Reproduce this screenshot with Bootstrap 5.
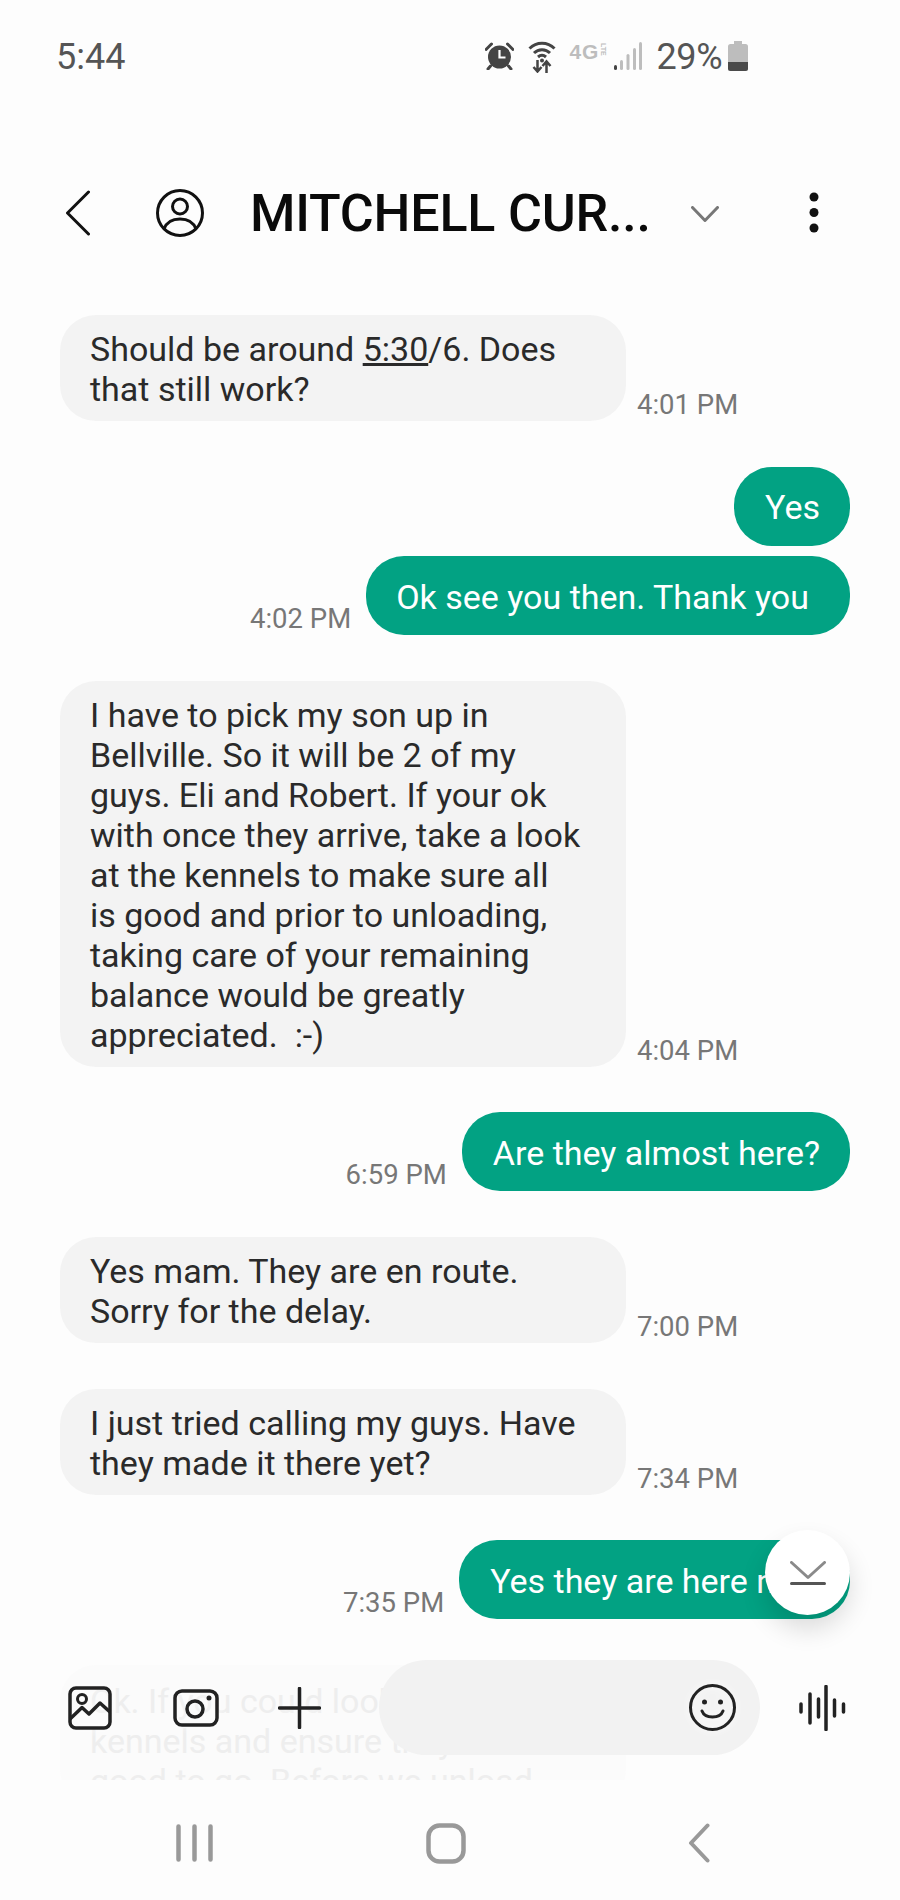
<!DOCTYPE html>
<html lang="en">
<head>
  <meta charset="UTF-8" />
  <meta name="viewport" content="width=device-width, initial-scale=1" />
  <title>Messages</title>
  <link href="https://cdn.jsdelivr.net/npm/bootstrap@5.3.0/dist/css/bootstrap.min.css" rel="stylesheet" />
  <style>
    body {
      background-color: #fdfdfd;
      font-family: Roboto, "Liberation Sans", sans-serif;
    }
    .phone {
      width: 900px;
      height: 1900px;
      overflow: hidden;
      background-color: #fdfdfd;
    }
    .status-row {
      height: 112px;
      padding-left: 56px;
      color: #555;
      font-size: 36px;
      flex: none;
    }
    .status-text { padding-top: 2px; }
    .status-icons {
      margin-left: 360px;
    }
    .icon-wifi { margin-left: 14px; }
    .net-mark {
      color: #bdbdbd;
      font-family: "Liberation Sans", sans-serif;
      font-size: 21px;
      font-weight: 700;
      line-height: 18px;
      letter-spacing: 1px;
      margin-left: 13px;
      margin-bottom: 9px;
      width: 37px;
    }
    .lte-mark {
      font-size: 7px;
      writing-mode: vertical-rl;
      line-height: 8px;
      letter-spacing: 0;
    }
    .icon-signal { margin-left: 8px; }
    .batt-pct { margin-left: 14px; letter-spacing: -0.3px; }
    .icon-batt { margin-left: 6px; }
    .top-row {
      height: 202px;
      flex: none;
    }
    .icon-back { margin-left: 65px; }
    .icon-avatar { margin-left: 65px; }
    .chat-title {
      font-size: 52px;
      font-weight: 500;
      color: #0a0a0a;
      width: 420px;
      margin-left: 46px;
      padding-top: 2px;
      letter-spacing: -0.2px;
    }
    .icon-drop { margin-left: 21px; margin-top: 2px; }
    .icon-more { margin-left: 90px; }
    .chat-list {
      flex: 1 1 auto;
      min-height: 0;
      overflow: hidden;
      padding: 1px 50px 0 60px;
      font-size: 34px;
      line-height: 40px;
    }
    .chat-row {
      margin-bottom: 45.600px;
    }
    .chat-row.tight {
      margin-bottom: 10.600px;
    }
    .bubble-in, .bubble-out {
      padding: 14px 30px 12px;
      min-height: 79px;
      display: flex;
      align-items: center;
    }
    .bubble-in {
      width: 566px;
      padding-right: 45px;
      flex: none;
      color: #2a2a2a;
      background-color: #f3f3f3;
      border-radius: 36px;
    }
    .bubble-out {
      padding-left: 31px;
      color: #fff;
      background-color: #02a283;
      border-radius: 38px;
    }
    .bubble-out.trail {
      padding-left: 30px;
      padding-right: 41px;
    }
    .chat-time {
      color: #777;
      font-size: 27.500px;
      line-height: 30px;
      margin-bottom: 1px;
      white-space: nowrap;
    }
    .bubble-in + .chat-time {
      margin-left: 11px;
    }
    .chat-time:has(+ .bubble-out) {
      margin-right: 15px;
    }
    .bubble-fade {
      color: #eee;
      background-color: #fbfbfb;
      align-items: flex-start;
      padding-top: 16px;
      height: 140px;
    }
    .composer {
      left: 0;
      right: 0;
      bottom: 145px;
      height: 95px;
      padding-left: 68px;
    }
    .composer svg {
      filter: drop-shadow(0 0 4px #fdfdfd);
    }
    .icon-cam { margin-left: 61px; }
    .icon-plus { margin-left: 59px; }
    .compose-pill {
      width: 381px;
      height: 95px;
      margin-left: 58px;
      margin-right: 39px;
      padding-right: 24px;
      background-color: #f2f2f2;
    }
    .jump-btn {
      width: 85px;
      height: 85px;
      right: 50px;
      bottom: 285px;
      background-color: #fff;
      box-shadow: 0 14px 26px rgba(0, 0, 0, 0.14);
    }
    .nav-row {
      height: 120px;
      flex: none;
      padding-top: 6px;
      background-color: #fdfdfd;
      position: relative;
    }
    .nav-menu { margin-left: 176px; }
    .nav-home { margin-left: 213px; }
    .nav-back { margin-left: 222px; }
  </style>
</head>
<body>
  <div class="phone position-relative d-flex flex-column">

    <div class="status-row d-flex align-items-center">
      <span class="status-text">5:44</span>
      <div class="status-icons d-flex align-items-center">
        <svg width="29" height="28" viewBox="0 0 29 28">
          <circle cx="14.500" cy="15" r="11.500" fill="#444" />
          <path d="M14.500 8v7.500h6" fill="none" stroke="#fff" stroke-width="2.200" />
          <path d="M1 7.500 6.500 2M28 7.500 22.500 2M5.500 24 3 27M23.500 24 26 27" fill="none" stroke="#444" stroke-width="3" stroke-linecap="round" />
        </svg>
        <svg class="icon-wifi" width="28" height="33" viewBox="0 0 28 33">
          <path d="M1.500 8.500C8.500 1.500 19.500 1.500 26.500 8.500M6 13c4.500-4.500 11.500-4.500 16 0M10 17c2.500-2.200 5.500-2.200 8 0" fill="none" stroke="#444" stroke-width="3" />
          <circle cx="14" cy="20.500" r="2" fill="#444" />
          <path d="M9.500 20v11M5.500 27l4 4.500 4-4.500M18.500 33V22M14.500 26l4-4.500 4 4.500" fill="none" stroke="#444" stroke-width="2.500" />
        </svg>
        <span class="net-mark d-flex">4G<span class="lte-mark">LTE</span></span>
        <svg class="icon-signal" width="28" height="28" viewBox="0 0 28 28">
          <rect x="0" y="23" width="3" height="5" rx="1.500" fill="#444" />
          <rect x="6" y="18" width="3" height="10" rx="1.500" fill="#bdbdbd" />
          <rect x="12.500" y="12" width="3" height="16" rx="1.500" fill="#bdbdbd" />
          <rect x="19" y="6" width="3" height="22" rx="1.500" fill="#bdbdbd" />
          <rect x="25" y="0" width="3" height="28" rx="1.500" fill="#bdbdbd" />
        </svg>
        <span class="batt-pct status-text">29%</span>
        <svg class="icon-batt" width="20" height="30" viewBox="0 0 20 30">
          <path d="M6 0h8v3h3.500Q20 3 20 5.500V27.500Q20 30 17.500 30H2.500Q0 30 0 27.500V5.500Q0 3 2.500 3H6z" fill="#bdbdbd" />
          <path d="M0 21H20V27.500Q20 30 17.500 30H2.500Q0 30 0 27.500z" fill="#4a4a4a" />
        </svg>
      </div>
    </div>

    <div class="top-row d-flex align-items-center">
      <svg class="icon-back" width="26" height="46" viewBox="0 0 26 46">
        <path d="M23.500 2 2.500 23l21 21" fill="none" stroke="#111" stroke-width="3" stroke-linecap="round" stroke-linejoin="round" />
      </svg>
      <svg class="icon-avatar" width="48" height="48" viewBox="0 0 48 48">
        <circle cx="24" cy="24" r="22.500" fill="none" stroke="#111" stroke-width="3" />
        <circle cx="24" cy="17.500" r="7.500" fill="none" stroke="#111" stroke-width="3" />
        <path d="M8 40C11 32 17 30 24 30S37 32 40 40" fill="none" stroke="#111" stroke-width="3" />
      </svg>
      <div class="chat-title text-nowrap">MITCHELL CUR...</div>
      <svg class="icon-drop" width="28" height="16" viewBox="0 0 28 16">
        <path d="M1.500 1.500 14 14.500 26.500 1.500" fill="none" stroke="#777" stroke-width="3" stroke-linecap="round" stroke-linejoin="round" />
      </svg>
      <svg class="icon-more" width="10" height="42" viewBox="0 0 10 42">
        <circle cx="5" cy="5" r="4.500" fill="#111" />
        <circle cx="5" cy="20.500" r="4.500" fill="#111" />
        <circle cx="5" cy="36" r="4.500" fill="#111" />
      </svg>
    </div>

    <div class="chat-list">
      <div class="chat-row d-flex align-items-end">
        <div class="bubble-in"><div>Should be around <u>5:30</u>/6. Does that still work?</div></div>
        <div class="chat-time">4:01 PM</div>
      </div>
      <div class="chat-row tight d-flex justify-content-end">
        <div class="bubble-out">Yes</div>
      </div>
      <div class="chat-row d-flex align-items-end justify-content-end">
        <div class="chat-time">4:02 PM</div>
        <div class="bubble-out trail">Ok see you then. Thank you</div>
      </div>
      <div class="chat-row d-flex align-items-end">
        <div class="bubble-in"><div>I have to pick my son up in Bellville. So it will be 2 of my guys. Eli and Robert. If your ok with once they arrive, take a look at the kennels to make sure all is good and prior to unloading, taking care of your remaining balance would be greatly appreciated. &nbsp;:-)</div></div>
        <div class="chat-time">4:04 PM</div>
      </div>
      <div class="chat-row d-flex align-items-end justify-content-end">
        <div class="chat-time">6:59 PM</div>
        <div class="bubble-out">Are they almost here?</div>
      </div>
      <div class="chat-row d-flex align-items-end">
        <div class="bubble-in"><div>Yes mam. They are en route. Sorry for the delay.</div></div>
        <div class="chat-time">7:00 PM</div>
      </div>
      <div class="chat-row d-flex align-items-end">
        <div class="bubble-in"><div>I just tried calling my guys. Have they made it there yet?</div></div>
        <div class="chat-time">7:34 PM</div>
      </div>
      <div class="chat-row d-flex align-items-end justify-content-end">
        <div class="chat-time">7:35 PM</div>
        <div class="bubble-out">Yes they are here now</div>
      </div>
      <div class="d-flex">
        <div class="bubble-in bubble-fade"><div>Ok. If you could look at the<br />kennels and ensure they are<br />good to go. Before we unload</div></div>
      </div>
    </div>

    <div class="nav-row d-flex align-items-center">
      <svg class="nav-menu" width="37" height="38" viewBox="0 0 37 38">
        <path d="M2.500 2.500v33M18.500 2.500v33M34.500 2.500v33" fill="none" stroke="#999" stroke-width="4.500" stroke-linecap="round" />
      </svg>
      <svg class="nav-home" width="40" height="41" viewBox="0 0 40 41">
        <rect x="2.500" y="2.500" width="35" height="36" rx="11" fill="none" stroke="#999" stroke-width="4.500" />
      </svg>
      <svg class="nav-back" width="22" height="40" viewBox="0 0 22 40">
        <path d="M19.500 2.500 3 20l16.500 17.500" fill="none" stroke="#999" stroke-width="4" stroke-linecap="round" stroke-linejoin="round" />
      </svg>
    </div>

    <div class="composer position-absolute d-flex align-items-center">
      <svg width="44" height="44" viewBox="0 0 44 44">
        <rect x="2" y="2" width="40" height="40" rx="6" fill="none" stroke="#222" stroke-width="3.500" />
        <circle cx="14" cy="13" r="4.500" fill="none" stroke="#222" stroke-width="3" />
        <path d="M2 33 14 21.500 21 28 32 17 42 26" fill="none" stroke="#222" stroke-width="3.500" stroke-linejoin="round" />
      </svg>
      <svg class="icon-cam" width="46" height="38" viewBox="0 0 46 38">
        <rect x="2" y="2" width="42" height="34" rx="7" fill="none" stroke="#222" stroke-width="3.500" />
        <circle cx="22" cy="20" r="8" fill="none" stroke="#222" stroke-width="3.500" />
        <circle cx="36" cy="9" r="2.500" fill="#222" />
      </svg>
      <svg class="icon-plus" width="43" height="42" viewBox="0 0 43 42">
        <path d="M21.500 1.500v39M1.500 21h40" fill="none" stroke="#222" stroke-width="3.500" stroke-linecap="round" />
      </svg>
      <div class="compose-pill rounded-pill d-flex align-items-center justify-content-end">
        <svg width="47" height="47" viewBox="0 0 47 47">
          <circle cx="23.500" cy="23.500" r="22" fill="none" stroke="#222" stroke-width="3" />
          <circle cx="15.500" cy="18" r="2.500" fill="#222" />
          <circle cx="31.500" cy="18" r="2.500" fill="#222" />
          <path d="M13 27c3 8 18 8 21 0" fill="none" stroke="#222" stroke-width="3" stroke-linecap="round" />
        </svg>
      </div>
      <svg width="47" height="46" viewBox="0 0 47 46">
        <path d="M2 19v8M11 9v29M19.500 14v18M27 1.500v43M35.500 15v16M44.500 19v8" fill="none" stroke="#222" stroke-width="3.500" stroke-linecap="round" />
      </svg>
    </div>

    <div class="jump-btn position-absolute rounded-circle d-flex align-items-center justify-content-center">
      <svg width="36" height="24" viewBox="0 0 36 24">
        <path d="M1.500 1.500 18 16.500 34.500 1.500" fill="none" stroke="#8a8a8a" stroke-width="3" stroke-linecap="round" stroke-linejoin="round" />
        <path d="M1.500 22.500h33" fill="none" stroke="#555" stroke-width="3" stroke-linecap="round" />
      </svg>
    </div>

  </div>
  <script src="https://cdn.jsdelivr.net/npm/bootstrap@5.3.0/dist/js/bootstrap.bundle.min.js"></script>
</body>
</html>
